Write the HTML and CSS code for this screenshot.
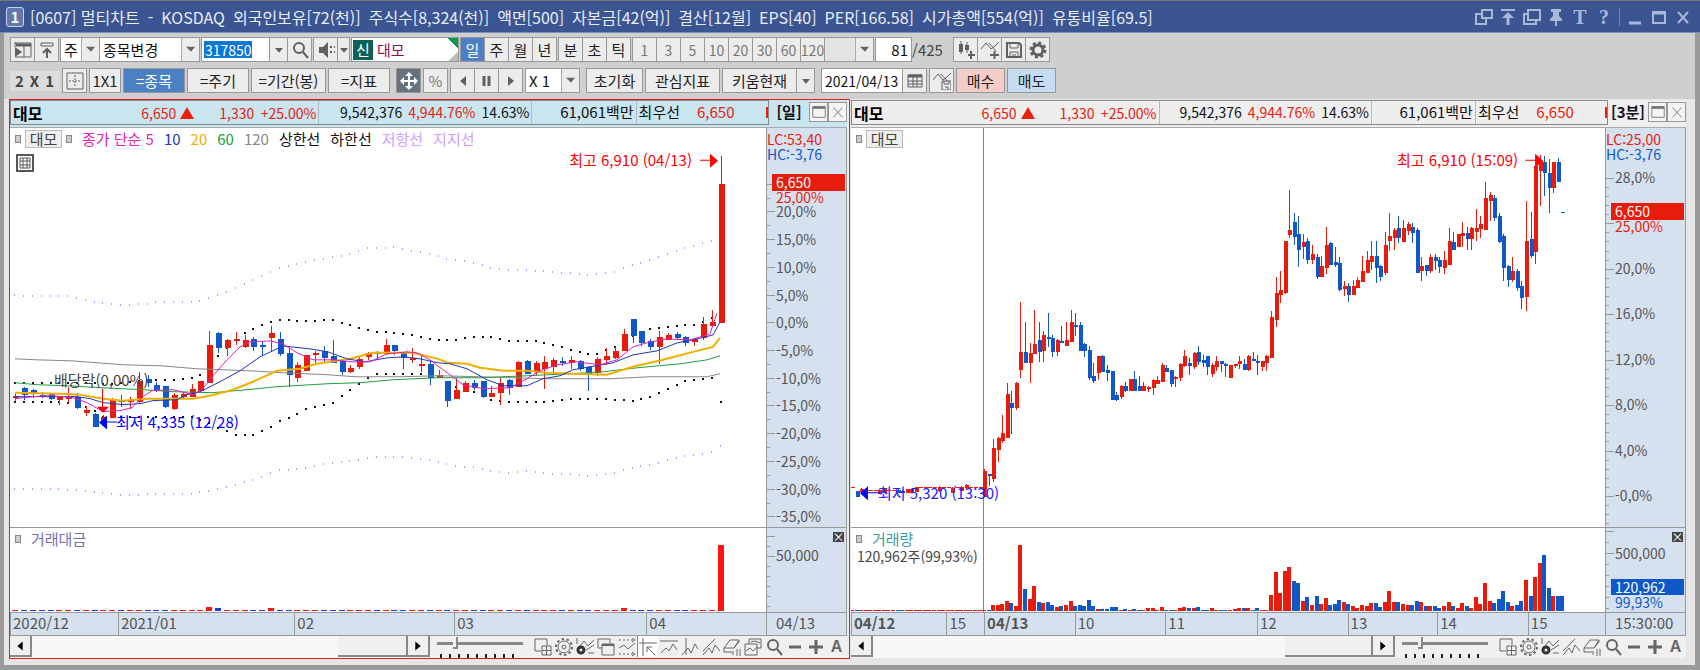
FILE: index.html
```html
<!DOCTYPE html>
<html lang="ko">
<head>
  <meta charset="UTF-8">
  <meta name="viewport" content="width=device-width, initial-scale=1.0">
  <title>[0607] 멀티차트</title>
  <link rel="stylesheet" href="styles.css">
</head>
<body>
  <svg class="defs" aria-hidden="true">
    <symbol id="i-dup" viewBox="0 0 18 18"><path d="M7 2h10v8H7zM7 6H1v10h10v-6" /></symbol>
    <symbol id="i-top" viewBox="0 0 18 18"><path d="M2 2h14" /><path d="M9 17V7" stroke-width="3" /><path class="fill" d="M3 10l6-6 6 6z" /></symbol>
    <symbol id="i-copy" viewBox="0 0 18 18"><path d="M5 2h12v10H5zM5 6H1v10h12v-4" /></symbol>
    <symbol id="i-pin" viewBox="0 0 18 18"><path class="fill" d="M4 1h10v3h-2v4l3 3v2H3v-2l3-3V4H4zM8 13h2v5H8z" /></symbol>
    <symbol id="i-min" viewBox="0 0 18 18"><path d="M3 15h12" stroke-width="3" /></symbol>
    <symbol id="i-max" viewBox="0 0 18 18"><path d="M3 4h12v11H3z" /><path d="M3 5h12" stroke-width="3" /></symbol>
    <symbol id="i-x" viewBox="0 0 18 18"><path d="M4 4l10 11M14 4L4 15" /></symbol>
    <symbol id="i-side" viewBox="0 0 18 18"><path d="M1 2h16v14H1M10 3v13M1 1v5" /><path d="M2 4h15" stroke-width="3" /><path class="fill" d="M1 6l7 5-7 5z" /></symbol>
    <symbol id="i-up" viewBox="0 0 18 18"><path d="M3 2h12v3H3z" /><path d="M9 17V8M5 12l4-4 4 4" stroke-width="2" /></symbol>
    <symbol id="i-search" viewBox="0 0 18 18"><circle cx="8" cy="7" r="5" stroke-width="2" /><path d="M12 11l5 6" stroke-width="2" /></symbol>
    <symbol id="i-sound" viewBox="0 0 18 18"><path class="fill" d="M2 6h4l5-5v16l-5-5H2z" /><path d="M13 6h2M13 11h2M17 6h1M17 11h1" stroke-width="2" /></symbol>
    <symbol id="i-bars" viewBox="0 0 18 18"><path d="M4 0v13M10 1v11" /><path class="fill" d="M2 3h4v8H2zM8 4h4v5H8z" /><path d="M11 14h7M14 10v8" stroke-width="2" /></symbol>
    <symbol id="i-wave" viewBox="0 0 18 18"><path d="M0 8l5-6 5 6 4-3 4-4M8 2l7 8" /><path d="M9 14h9M13.500 10v8" stroke-width="2" /></symbol>
    <symbol id="i-save" viewBox="0 0 18 18"><path d="M2 2h12l2 2v12H2z" stroke-width="2" /><path d="M5 2v5h8V2M5 16v-5h8v5M7 14h4" /></symbol>
    <symbol id="i-gear" viewBox="0 0 18 18"><circle cx="9" cy="9" r="5" stroke-width="3" /><circle cx="9" cy="9" r="7" stroke-width="3" stroke-dasharray="3 2.500" /></symbol>
    <symbol id="i-dash" viewBox="0 0 18 18"><path d="M1 1h16v16H1z" /><path d="M9 3v12M3 9h12" stroke-dasharray="2 1" /></symbol>
    <symbol id="i-move" viewBox="0 0 18 18"><path d="M9 3v12M3 9h12" stroke-width="2" /><path class="fill" d="M9 0l4 4H5zM9 18l4-4H5zM0 9l4-4v8zM18 9l-4-4v8z" /></symbol>
    <symbol id="i-prev" viewBox="0 0 18 18"><path class="fill" d="M12 4v10L6 9z" /></symbol>
    <symbol id="i-pause" viewBox="0 0 18 18"><path d="M6 4v10M11 4v10" stroke-width="3" /></symbol>
    <symbol id="i-next" viewBox="0 0 18 18"><path class="fill" d="M6 4v10l6-5z" /></symbol>
    <symbol id="i-down" viewBox="0 0 18 18"><path class="fill" d="M3 6h12l-6 7z" /></symbol>
    <symbol id="i-cal" viewBox="0 0 18 18"><path d="M2 3h14v12H2zM2 9h14M2 12h14M7 5v10M11 5v10" /><path d="M2 4h14" stroke-width="3" /></symbol>
    <symbol id="i-wavesave" viewBox="0 0 18 18"><path d="M0 8l5-6 5 6 4-3 4-4M8 2l7 8M9 9h9v9H9zM11 9v3h5V9M12 15h3v3" /></symbol>
    <symbol id="i-table" viewBox="0 0 18 18"><path d="M1 1h16v16H1z" stroke-width="2" /><path d="M4 4h10v10H4zM4 7h10M4 11h10M7 4v10M11 4v10" /></symbol>
    <symbol id="i-newwin" viewBox="0 0 18 18"><path d="M7 13H1V1h12v6" /><path d="M8 8h9v9H8zM8 12.500h9M12.500 8v9" /></symbol>
    <symbol id="i-cog" viewBox="0 0 18 18"><circle cx="9" cy="9" r="6" /><circle cx="9" cy="9" r="2" /><circle cx="9" cy="9" r="8" stroke-width="2" stroke-dasharray="2.500 2.500" /></symbol>
    <symbol id="i-set" viewBox="0 0 18 18"><path d="M1 0v6M4 8l4-5 4 5 6-6M10 12l8-5M12 15h6" /><circle class="ring" cx="5" cy="12" r="3" stroke-width="3" /></symbol>
    <symbol id="i-stack" viewBox="0 0 18 18"><path d="M5 10H1V1h12v4M5 6h12v11H5z" /><path d="M5 7h12" stroke-width="2" /></symbol>
    <symbol id="i-fit" viewBox="0 0 18 18"><path d="M1 2h16M1 16h16" stroke-dasharray="2 2" /><path d="M1 10l5-3 4 4 7-6M14 0l3 2-3 2M14 14l3 2-3 2" /></symbol>
    <symbol id="i-cross" viewBox="0 0 18 18"><path d="M4 0v18M0 5h18M8 9l8 8M8 14V9h5" /></symbol>
    <symbol id="i-hline" viewBox="0 0 18 18"><path d="M0 3h18M1 15l5-5 3 3 4-7 4 6" /></symbol>
    <symbol id="i-vline" viewBox="0 0 18 18"><path d="M5 0v17M1 17l6-7 3 5 4-9 3 5" /></symbol>
    <symbol id="i-trend" viewBox="0 0 18 18"><path d="M1 13L13 1M1 17l6-7 3 5 3-8 5 6" /></symbol>
    <symbol id="i-erase" viewBox="0 0 18 18"><path d="M1 10l6-8h9l-5 8zM1 10v4h8M11 10l5-6V2M10 17v-4M14 11v7M17 11v7" /></symbol>
    <symbol id="i-pics" viewBox="0 0 18 18"><path d="M5 6V1h12v9h-4M1 6h12v11H1zM2 13l4-3 3 3 4-4M7 4l4-1 5 2" /></symbol>
    <symbol id="i-minus" viewBox="0 0 18 18"><path d="M3 9h12" stroke-width="3" /></symbol>
    <symbol id="i-plus" viewBox="0 0 18 18"><path d="M2 9h14M9 2v14" stroke-width="3" /></symbol>
    <symbol id="i-box" viewBox="0 0 18 18"><path d="M2 3h14v12H2z" /><path d="M2 4h14" stroke-width="3" /></symbol>
  </svg>

  <header class="titlebar">
    <span class="win-no">1</span>
    <h1 class="title">
      <span>[0607] 멀티차트</span><span>-</span><span>KOSDAQ</span><span>외국인보유[72(천)]</span><span>주식수[8,324(천)]</span><span>액면[500]</span><span>자본금[42(억)]</span><span>결산[12월]</span><span>EPS[40]</span><span>PER[166.58]</span><span>시가총액[554(억)]</span><span>유통비율[69.5]</span>
    </h1>
    <div class="win-tools">
      <button aria-label="창 복제"><svg><use href="#i-dup" /></svg></button>
      <button aria-label="맨 위"><svg><use href="#i-top" /></svg></button>
      <button aria-label="복사"><svg><use href="#i-copy" /></svg></button>
      <button aria-label="고정"><svg><use href="#i-pin" /></svg></button>
      <button class="serif">T</button>
      <button class="serif">?</button>
      <i class="bar"></i>
      <button aria-label="최소화"><svg><use href="#i-min" /></svg></button>
      <button aria-label="최대화"><svg><use href="#i-max" /></svg></button>
      <button aria-label="닫기"><svg><use href="#i-x" /></svg></button>
    </div>
  </header>

  <main class="window">
    <div class="toolbar tight">
      <div class="group">
        <button aria-label="사이드"><svg><use href="#i-side" /></svg></button>
        <button aria-label="위로"><svg><use href="#i-up" /></svg></button>
      </div>
      <div class="group">
        <select class="w-40" aria-label="구분"><option>주</option></select>
        <select class="w-100" aria-label="변경"><option>종목변경</option></select>
      </div>
      <div class="group">
        <input class="code" type="text" value="317850" aria-label="종목코드">
        <button class="narrow" aria-label="목록"><svg><use href="#i-down" /></svg></button>
        <button aria-label="검색"><svg><use href="#i-search" /></svg></button>
      </div>
      <div class="group">
        <button aria-label="소리"><svg><use href="#i-sound" /></svg></button>
        <button class="slim" aria-label="소리 설정"><svg><use href="#i-down" /></svg></button>
      </div>
      <div class="stock"><b>신</b><span>대모</span></div>
      <div class="group">
        <button class="on">일</button><button>주</button><button>월</button><button>년</button>
      </div>
      <div class="group">
        <button>분</button><button>초</button><button>틱</button>
      </div>
      <div class="group dim">
        <button>1</button><button>3</button><button>5</button><button>10</button><button>20</button><button>30</button><button>60</button><button>120</button>
        <select class="w-50" aria-label="기타 주기" disabled><option></option></select>
      </div>
      <div class="count"><input type="text" value="81" aria-label="봉 개수"><span>/425</span></div>
      <div class="group">
        <button aria-label="봉 추가"><svg><use href="#i-bars" /></svg></button>
        <button aria-label="지표 추가"><svg><use href="#i-wave" /></svg></button>
        <button aria-label="저장"><svg><use href="#i-save" /></svg></button>
        <button aria-label="설정"><svg><use href="#i-gear" /></svg></button>
      </div>
    </div>

    <div class="toolbar">
      <span class="layout"><span>2</span> <span>X</span> <span>1</span></span>
      <div class="group"><button aria-label="배열"><svg><use href="#i-dash" /></svg></button></div>
      <div class="group"><button class="w-32">1X1</button></div>
      <div class="group"><button class="w-62 on">=종목</button></div>
      <div class="group"><button class="w-62">=주기</button></div>
      <div class="group"><button class="w-75">=기간(봉)</button></div>
      <div class="group push"><button class="w-62">=지표</button></div>
      <div class="group"><button class="dark" aria-label="이동"><svg><use href="#i-move" /></svg></button></div>
      <div class="group"><button class="pct">%</button></div>
      <div class="group">
        <button aria-label="이전"><svg><use href="#i-prev" /></svg></button>
        <button aria-label="정지"><svg><use href="#i-pause" /></svg></button>
        <button aria-label="다음"><svg><use href="#i-next" /></svg></button>
      </div>
      <div class="group push"><select class="w-55" aria-label="배속"><option>X 1</option></select></div>
      <div class="group"><button class="w-56">초기화</button></div>
      <div class="group"><button class="w-75">관심지표</button></div>
      <div class="group push">
        <button class="w-75">키움현재</button>
        <button class="narrow" aria-label="목록"><svg><use href="#i-down" /></svg></button>
      </div>
      <div class="group">
        <input class="date" type="text" value="2021/04/13" aria-label="날짜">
        <button aria-label="달력"><svg><use href="#i-cal" /></svg></button>
      </div>
      <div class="group"><button aria-label="지표 저장"><svg><use href="#i-wavesave" /></svg></button></div>
      <div class="group"><button class="w-49 buy">매수</button></div>
      <div class="group"><button class="w-49 sell">매도</button></div>
    </div>

    <div class="panels">
      <section class="panel active">
        <div class="head">
          <div class="quote">
            <div class="q1"><b>대모</b><span>6,650</span><i class="tri"></i><span class="chg">1,330</span><span class="rate">+25.00%</span></div>
            <div class="q2"><span>9,542,376</span><span class="up">4,944.76%</span><span>14.63%</span></div>
            <div class="q3">61,061백만</div>
            <div class="q4">최우선<span class="up">6,650</span></div>
          </div>
          <b class="cycle">[일]</b>
          <div class="mini">
            <button aria-label="확대"><svg><use href="#i-box" /></svg></button><button aria-label="닫기"><svg><use href="#i-x" /></svg></button>
          </div>
        </div>
        <div class="plot">
          <svg id="day-plot"></svg>
          <div class="legend">
            <i class="sq"></i><span class="chip">대모</span><i class="sq"></i>
            <span class="ma5">종가 단순 5</span><span class="ma10">10</span><span class="ma20">20</span><span class="ma60">60</span><span class="ma120">120</span><span>상한선</span><span>하한선</span><span class="band">저항선</span><span class="band">지지선</span>
          </div>
          <button class="grid-btn" aria-label="표"><svg><use href="#i-table" /></svg></button>
        </div>
        <div class="axis"><svg id="day-axis"></svg></div>
        <div class="plot volume">
          <svg id="day-vol"></svg>
          <div class="legend"><i class="sq"></i><span class="amount">거래대금</span></div>
        </div>
        <div class="axis volume"><svg id="day-vaxis"></svg><button class="close" aria-label="지표 닫기">×</button></div>
        <div class="time">
          <span style="flex-grow: 107">2020/12</span><span style="flex-grow: 177">2021/01</span><span style="flex-grow: 160">02</span><span style="flex-grow: 193">03</span><span style="flex-grow: 119">04</span>
        </div>
        <div class="time now">04/13</div>
        <div class="foot">
          <div class="scroll">
            <button aria-label="왼쪽"><svg><use href="#i-prev" /></svg></button>
            <div class="track"><i class="thumb"></i></div>
            <button aria-label="오른쪽"><svg><use href="#i-next" /></svg></button>
          </div>
          <input class="zoom" type="range" min="0" max="100" value="20" aria-label="확대 비율">
          <div class="tools">
            <button aria-label="새 창"><svg><use href="#i-newwin" /></svg></button>
            <button aria-label="환경"><svg><use href="#i-cog" /></svg></button>
            <button aria-label="지표 설정"><svg><use href="#i-set" /></svg></button>
            <button aria-label="겹치기"><svg><use href="#i-stack" /></svg></button>
            <button aria-label="맞춤"><svg><use href="#i-fit" /></svg></button>
            <button class="sel" aria-label="십자선"><svg><use href="#i-cross" /></svg></button>
            <button aria-label="수평선"><svg><use href="#i-hline" /></svg></button>
            <button aria-label="수직선"><svg><use href="#i-vline" /></svg></button>
            <button aria-label="추세선"><svg><use href="#i-trend" /></svg></button>
            <button aria-label="전체 지우기"><svg><use href="#i-erase" /></svg></button>
            <button aria-label="그림"><svg><use href="#i-pics" /></svg></button>
            <button aria-label="돋보기"><svg><use href="#i-search" /></svg></button>
            <button aria-label="축소"><svg><use href="#i-minus" /></svg></button>
            <button aria-label="확대"><svg><use href="#i-plus" /></svg></button>
            <button class="auto">A</button>
          </div>
        </div>
      </section>

      <section class="panel">
        <div class="head">
          <div class="quote">
            <div class="q1"><b>대모</b><span>6,650</span><i class="tri"></i><span class="chg">1,330</span><span class="rate">+25.00%</span></div>
            <div class="q2"><span>9,542,376</span><span class="up">4,944.76%</span><span>14.63%</span></div>
            <div class="q3">61,061백만</div>
            <div class="q4">최우선<span class="up">6,650</span></div>
          </div>
          <b class="cycle">[3분]</b>
          <div class="mini">
            <button aria-label="확대"><svg><use href="#i-box" /></svg></button><button aria-label="닫기"><svg><use href="#i-x" /></svg></button>
          </div>
        </div>
        <div class="plot">
          <svg id="min-plot"></svg>
          <div class="legend"><i class="sq"></i><span class="chip">대모</span></div>
        </div>
        <div class="axis"><svg id="min-axis"></svg></div>
        <div class="plot volume">
          <svg id="min-vol"></svg>
          <div class="legend"><i class="sq"></i><span class="qty">거래량</span></div>
          <div class="qty-text">120,962주(99,93%)</div>
        </div>
        <div class="axis volume"><svg id="min-vaxis"></svg><button class="close" aria-label="지표 닫기">×</button></div>
        <div class="time">
          <b style="flex-grow: 96">04/12</b><span style="flex-grow: 36">15</span><b style="flex-grow: 91">04/13</b><span style="flex-grow: 91">10</span><span style="flex-grow: 92">11</span><span style="flex-grow: 91">12</span><span style="flex-grow: 90">13</span><span style="flex-grow: 91">14</span><span style="flex-grow: 77">15</span>
        </div>
        <div class="time now">15:30:00</div>
        <div class="foot">
          <div class="scroll">
            <button aria-label="왼쪽"><svg><use href="#i-prev" /></svg></button>
            <div class="track"><i class="thumb wide"></i></div>
            <button aria-label="오른쪽"><svg><use href="#i-next" /></svg></button>
          </div>
          <input class="zoom" type="range" min="0" max="100" value="20" aria-label="확대 비율">
          <div class="tools">
            <button aria-label="새 창"><svg><use href="#i-newwin" /></svg></button>
            <button aria-label="환경"><svg><use href="#i-cog" /></svg></button>
            <button aria-label="지표 설정"><svg><use href="#i-set" /></svg></button>
            <button aria-label="추세선"><svg><use href="#i-trend" /></svg></button>
            <button aria-label="전체 지우기"><svg><use href="#i-erase" /></svg></button>
            <button aria-label="돋보기"><svg><use href="#i-search" /></svg></button>
            <button aria-label="축소"><svg><use href="#i-minus" /></svg></button>
            <button aria-label="확대"><svg><use href="#i-plus" /></svg></button>
            <button class="auto">A</button>
          </div>
        </div>
      </section>
    </div>
  </main>

  <script src="chart.js"></script>
</body>
</html>
```

FILE: styles.css
```css
* {
  box-sizing: border-box;
}

body {
  margin: 0;
  height: 100vh;
  min-height: 480px;
  display: flex;
  flex-direction: column;
  overflow: hidden;
  font-family: "Noto Sans CJK KR", sans-serif;
  font-size: 15px;
  line-height: 20px;
  color: #111;
  white-space: nowrap;
}

button,
input,
select {
  font: inherit;
  color: inherit;
  margin: 0;
  padding: 0;
  border-radius: 0;
}

button {
  display: flex;
  align-items: center;
  justify-content: center;
  border: 0;
  background: none;
}

svg {
  fill: none;
  stroke: currentColor;
  display: block;
}

.fill {
  fill: currentColor;
  stroke: none;
}

.ring {
  stroke: #333;
}

.defs {
  display: none;
}

/* title bar */

.titlebar {
  display: flex;
  align-items: center;
  height: 33px;
  padding: 0 8px 0 6px;
  background: #3a5591;
  border-top: 1px solid #777;
  border-bottom: 1px solid #7d90bd;
  color: #e8edf8;
}

.win-no {
  width: 18px;
  height: 20px;
  line-height: 18px;
  border: 1px solid #c8d2ea;
  border-radius: 3px;
  background: #6379ae;
  font-weight: bold;
  text-align: center;
  color: #fff;
}

.title {
  display: flex;
  gap: 8px;
  margin: 0 auto 0 6px;
  font-size: 16px;
  font-weight: normal;
}

.win-tools {
  display: flex;
  align-items: center;
  gap: 6px;
  color: #aab8d8;
}

.win-tools button {
  width: 18px;
  height: 20px;
}

.win-tools svg {
  width: 18px;
  height: 18px;
  stroke-width: 2;
}

.win-tools .serif {
  font-family: "Liberation Serif", serif;
  font-size: 20px;
  font-weight: bold;
}

.win-tools .bar {
  width: 1px;
  height: 18px;
  background: #7385b3;
}

/* toolbars */

.window {
  flex: 1;
  min-height: 0;
  display: flex;
  flex-direction: column;
  border: solid #9b9b9b;
  border-width: 0 5px 5px 4px;
  background: #cfcfcf;
}

.toolbar {
  display: flex;
  align-items: center;
  gap: 2px;
  height: 25px;
  margin: 5px 0 6px 6px;
}

.toolbar.tight {
  gap: 1px;
  margin: 4px 0 1px 6px;
}

.group {
  display: flex;
  height: 25px;
}

.group > * {
  border: 1px solid #989898;
  background: #ececec;
}

.group > * + * {
  margin-left: -1px;
}

.group button {
  width: 25px;
  color: #222;
}

.group button svg {
  width: 18px;
  height: 18px;
  color: #606060;
}

.group .narrow {
  width: 19px;
}

.group .slim {
  width: 13px;
}

.group .narrow svg,
.group .slim svg {
  width: 12px;
  flex: none;
}

.group .on {
  background: #4c80c4;
  color: #fff;
}

.group .dark {
  background: #66727f;
}

.group .dark svg {
  color: #fff;
}

.group .pct,
.dim button {
  color: #777;
}

.dim button {
  font-size: 14px;
}

.group .buy {
  background: #f5cdc8;
}

.group .sell {
  background: #c5dcf3;
}

.group.push {
  margin-right: 4px;
}

.group .w-32 { width: 32px; }
.group .w-49 { width: 49px; }
.group .w-56 { width: 57px; }
.group .w-62 { width: 62px; }
.group .w-75 { width: 75px; }
.w-40 { width: 40px; }
.w-50 { width: 50px; }
.w-55 { width: 55px; }
.w-100 { width: 101px; }

select {
  appearance: none;
  padding: 0 0 0 3px;
}

.group select {
  background:
    url("data:image/svg+xml,%3Csvg xmlns='http://www.w3.org/2000/svg' width='18' height='24'%3E%3Cpath fill='%23ececec' d='M0 0h18v24H0z'/%3E%3Cpath fill='%23aaa' d='M0 0h1v24H0z'/%3E%3Cpath fill='%23666' d='M5 9h9l-4 5z'/%3E%3C/svg%3E") right center no-repeat #fff;
}

.group select:disabled {
  opacity: 1;
  background-color: #e4e4e4;
}

.group input,
.count input {
  background-color: #fff;
  padding: 0 3px;
}

.group .code {
  width: 69px;
  background: linear-gradient(#0a78d7, #0a78d7) 2px center / 48px 17px no-repeat #fff;
  color: #fff;
  font-size: 14px;
}

.group .date {
  width: 82px;
  font-size: 14px;
}

.stock {
  display: flex;
  align-items: center;
  gap: 4px;
  width: 108px;
  height: 25px;
  padding-left: 1px;
  border: 1px solid #989898;
  color: #8b1050;
  background:
    linear-gradient(to top right, transparent 50%, #0a9a55 50%) right top / 10px 11px no-repeat,
    linear-gradient(to bottom right, transparent 50%, #bbb 50%) right bottom / 9px 10px no-repeat,
    #fff;
}

.stock b {
  width: 20px;
  background: #0a6158;
  color: #fff;
  font-weight: normal;
  text-align: center;
}

.count {
  display: flex;
  align-items: center;
  width: 77px;
  color: #444;
}

.count input {
  width: 37px;
  height: 25px;
  border: 1px solid #989898;
  text-align: right;
  color: #111;
}

.layout {
  display: flex;
  justify-content: space-between;
  width: 50px;
  padding: 0 6px 0 5px;
  background: #dcdcdc;
  font-weight: bold;
  color: #444;
}

/* chart panels */

.panels {
  flex: 1;
  min-height: 0;
  display: grid;
  grid-template-columns: 841fr 837fr;
  padding: 0 8px 6px 5px;
  background: #e6e6e6;
}

.panel {
  display: grid;
  grid-template-columns: minmax(0, 1fr) 81px;
  grid-template-rows: 28px minmax(0, 401fr) minmax(0, 85fr) 24px 22px;
  border: 1px solid #e6e6e6;
  background: #eee;
  min-width: 0;
}

.panel.active {
  padding-right: 2px;
  border-color: #f01818;
}

.head {
  grid-column: 1 / -1;
  display: flex;
  align-items: flex-start;
  border-bottom: 1px solid #aaa;
}

.quote {
  flex: 1;
  display: flex;
  height: 25px;
  line-height: 22px;
  border: 1px solid #888;
  background: #eee;
  overflow: hidden;
}

.active .head,
.active .quote {
  background: #c8e5f0;
}

.quote > div {
  display: flex;
  justify-content: flex-end;
  gap: 6px;
  min-width: 0;
  padding: 0 2px;
  border-right: 1px solid #b5bcc0;
}

.quote .q1 {
  flex: 312 1 0;
  align-items: center;
  gap: 4px;
  font-size: 14px;
  color: #e8200c;
}

.q1 b {
  flex: 1;
  font-size: 16px;
  color: #000;
}

.tri {
  border: solid transparent;
  border-width: 0 7px 12px;
  border-bottom-color: #e8200c;
}

.chg {
  width: 56px;
  text-align: right;
}

.rate {
  width: 58px;
  text-align: right;
}

.quote .q2 {
  flex: 214 1 0;
  font-size: 14px;
}

.quote .q3 {
  flex: 102 1 0;
}

.quote .q4 {
  flex: 129 1 0;
  justify-content: flex-start;
  gap: 17px;
  border: solid;
  border-width: 0 2px 0 0;
  border-image: linear-gradient(transparent 30%, #e8200c 30%, #e8200c 70%, transparent 70%) 1;
}

.up {
  color: #e8200c;
}

.cycle {
  width: 40px;
  line-height: 24px;
  text-align: center;
}

.mini {
  display: flex;
  margin-top: 2px;
}

.mini button {
  width: 19px;
  height: 20px;
  border: 1px solid #999;
  background: #f4f4f4;
  color: #777;
}

.mini svg {
  width: 16px;
  height: 16px;
  flex: none;
}

.plot {
  position: relative;
  min-width: 0;
  background: #fff;
}

.plot > svg,
.axis > svg {
  position: absolute;
  inset: 0;
  width: 100%;
  height: 100%;
  stroke: none;
}

.axis {
  position: relative;
  background: #d6e1ef;
  border: solid #999;
  border-width: 0 1px;
}

.volume {
  border-top: 1px solid #999;
}

.legend {
  position: relative;
  display: flex;
  align-items: center;
  gap: 10px;
  height: 18px;
  padding-left: 5px;
  margin-top: 2px;
}

.sq {
  width: 6px;
  height: 8px;
  border: 1px solid #888;
  background: #ccc;
}

.chip {
  width: 37px;
  height: 18px;
  line-height: 16px;
  margin: 0 -6px;
  border: 1px solid #bbb;
  background: #eee;
  color: #444;
  text-align: center;
}

.ma5 { color: #e020b8; }
.ma10 { color: #2038b8; }
.ma20 { color: #f0ae00; }
.ma60 { color: #20a040; }
.ma120 { color: #888; }
.band { color: #cf9cff; }
.amount { color: #7470a8; }
.qty { color: #409c9c; }

.qty-text {
  position: relative;
  padding-left: 6px;
  font-size: 14px;
  line-height: 16px;
  color: #444;
}

.grid-btn {
  position: relative;
  margin: 6px 0 0 6px;
}

.grid-btn svg {
  width: 18px;
  height: 18px;
  color: #555;
}

.close {
  position: absolute;
  top: 4px;
  right: 2px;
  width: 11px;
  height: 10px;
  background: #444;
  color: #fff;
  font-size: 12px;
  line-height: 10px;
}

.time {
  display: flex;
  min-width: 0;
  border: solid #999;
  border-width: 1px 0;
  background: #d6e1ef;
  color: #555;
}

.time > * {
  flex: 1 1 0;
  min-width: 0;
  padding-left: 2px;
  border-left: 1px solid #999;
}

.time.now {
  padding-left: 9px;
  border-width: 1px;
}

.foot {
  grid-column: 1 / -1;
  display: flex;
  background: #f0f0f0;
}

.scroll {
  flex: 1;
  display: flex;
}

.scroll button,
.thumb {
  width: 22px;
  height: 21px;
  border: solid #888;
  border-width: 0 2px 2px 0;
  background: #f0f0f0;
  color: #000;
}

.scroll svg {
  width: 16px;
  height: 16px;
}

.track {
  flex: 1;
  display: flex;
  justify-content: flex-end;
  background: #f7f7f7;
}

.thumb {
  width: 70px;
}

.thumb.wide {
  width: 88px;
}

.zoom {
  appearance: none;
  width: 86px;
  height: 22px;
  margin: 0 9px 0 7px;
  background:
    repeating-linear-gradient(to right, #222 0 2px, transparent 2px 9px) 3px bottom / 80px 4px no-repeat,
    linear-gradient(#888, #888) 0 6px / 100% 3px no-repeat;
}

.zoom::-webkit-slider-thumb {
  appearance: none;
  width: 5px;
  height: 12px;
  margin-top: -8px;
  border: solid #888;
  border-width: 0 2px 2px 0;
  background: #f0f0f0;
}

.tools {
  display: flex;
}

.tools button {
  width: 21px;
  height: 21px;
  color: #666;
}

.tools svg {
  width: 18px;
  height: 18px;
}

.tools .sel {
  background: #fff;
  border-left: 1px solid #888;
}

.tools .auto {
  font-family: "Liberation Sans", sans-serif;
  font-size: 16px;
  font-weight: bold;
}

/* svg text */

.plot text,
.axis text {
  font-size: 15px;
  dominant-baseline: central;
}

.axis text {
  font-size: 14px;
}
```

FILE: chart.js
```js
const RED = '#e81c0c';
const BLUE = '#1058c8';

// each bar: colour, high, body top, body bottom, low (in plot units)
const dayBars = `R267,269,270,274 B260,261,267,273 B262,263,265,271 B265,268,269,271 B266,266,271,273 R269,270,272,278
R260,270,271,276 B266,270,280,282 R279,283,285,289 B286,287,299,300 R288,290,292,293 R271,273,290,290 B268,273,274,280
R270,273,274,282 R245,254,274,276 B248,252,255,260 B255,258,262,265 B259,259,279,281 R266,268,281,283 R265,267,269,272
R257,262,269,270 R254,254,263,266 R204,218,255,256 B205,206,220,226 R212,213,220,229 R205,212,213,218 R208,213,219,221
B210,212,219,224 B214,218,219,229 R199,206,210,225 B205,212,226,229 B221,226,247,260 R235,238,250,255 R228,228,243,243
R224,226,227,236 B219,224,230,235 B213,229,235,236 B233,234,244,248 R238,241,244,246 R230,232,239,242 R225,226,229,233
B224,225,226,232 R212,218,226,228 B218,218,223,228 B225,226,230,242 R221,231,232,236 R228,237,238,245 B233,237,250,258
R243,248,250,251 B254,254,273,280 R251,263,271,272 R254,256,264,264 B253,256,260,263 B254,254,269,271 R259,266,269,269
R251,256,265,278 B252,253,260,268 R234,235,259,259 B233,234,246,246 R234,236,244,248 R229,235,241,262 R231,233,239,246
B230,234,235,239 R229,233,235,242 B233,234,241,244 B239,240,246,264 R230,232,245,249 R221,229,232,238 R220,224,230,232
R202,207,223,224 B192,192,208,216 B204,204,215,219 B212,214,219,223 R204,210,219,237 R206,208,212,213 B205,207,210,213
B209,210,215,219 R211,212,214,219 R190,197,210,213 R183,195,198,198 R28,56,195,195`;

const minBars = `R361,361,361,361 B365,365,370,370 R362,363,365,365 R364,364,364,364 R364,364,364,364 R364,364,364,364 R363,364,367,368
R363,363,366,366 R364,364,364,364 R364,364,364,364 B363,364,366,366 B364,365,366,366 R364,363,366,366 R363,363,366,366 R361,361,365,365
R361,361,361,361 R361,361,361,361 R361,361,361,361 R361,361,361,361 R360,361,364,366 R361,361,361,361 R361,361,361,361 R361,362,366,367
R361,361,361,361 R360,361,364,365 R358,359,361,363 R361,361,361,361 R361,361,361,361 R361,361,361,361
R343,345,370,370 B348,348,349,360 R313,322,352,356 R311,312,323,336 R288,307,314,316 R256,267,310,310 B264,276,280,307
R255,256,280,283 R175,225,242,251 B195,225,235,236 R216,226,235,256 R183,217,226,227 B195,213,224,235 R204,208,223,235
B186,210,211,220 B208,211,224,230 R212,213,224,229 B199,214,215,215 R195,213,218,218 R183,195,214,215 B186,198,199,209
B195,198,223,224 B216,217,223,230 B219,223,250,253 B236,249,253,256 R229,229,245,253 B228,229,244,245 B238,243,245,254
B244,244,272,272 B265,268,272,274 R258,259,269,272 B255,259,263,265 R252,252,263,263 B244,252,263,263 B249,259,263,263
R255,259,263,263 R259,260,261,265 R252,253,260,268 R249,253,256,256 R236,238,254,254 B238,241,244,244 B243,243,256,260
R249,250,251,260 R236,237,250,254 R223,229,238,240 B231,236,238,248 R225,226,239,242 B219,225,234,238 B228,233,235,240
B229,229,239,248 R236,238,246,250 R229,234,239,244 B234,234,236,245 B236,237,238,250 R238,238,250,250 R237,237,238,241
R229,234,236,242 B232,237,242,242 R228,229,242,244 B225,232,233,233 B228,234,235,248 R234,234,239,244 R228,229,235,244
R184,190,230,230 R150,166,192,200 R144,163,167,176 R114,114,165,167 R62,103,107,110 B85,94,108,117 B88,107,122,139
R107,115,119,132 B111,114,132,137 R118,127,132,137 B127,130,149,152 R129,139,149,149 R99,118,140,146 B115,116,137,137
B120,135,137,140 B130,136,162,164 R154,159,161,169 B156,159,167,175 R153,159,167,167 R150,153,160,160 R129,144,154,154
R124,133,145,146 R114,129,134,143 B114,129,140,156 B138,139,149,154 R105,118,145,148 R85,109,113,123 R101,103,110,123
B88,101,110,115 R92,100,113,113 R94,96,102,107 B95,99,104,115 B101,103,145,145 R130,139,143,154 B138,138,143,149
R127,130,143,146 B127,130,133,143 B130,133,139,146 R124,133,140,147 R100,114,137,137 B105,115,122,123 R107,107,119,119
R94,106,108,119 B99,106,111,122 R99,100,110,122 R81,101,104,113 R88,96,100,110 R54,70,101,101 R64,67,72,93 B67,70,89,93
B85,88,113,115 B107,109,140,154 B138,139,152,160 R130,144,152,155 B142,144,160,164 B154,159,170,182 R73,114,169,184
B84,112,128,130 R36,38,123,137 R27,33,42,78 B28,34,44,68 B31,45,59,85 R34,34,59,65 B30,34,53,53 B84,84,84,84`;

const minVolume = [1, 1, 6, 6, 7, 10, 8, 5, 66, 22, 12, 25, 9, 8, 9, 6, 4, 5, 6, 10, 5, 6, 5, 11, 5, 2, 2, 2, 4, 4, 1, 2, 1, 2,
  1, 1, 3, 3, 1, 4, 1, 1, 1, 3, 4, 3, 3, 4, 1, 1, 3, 1, 1, 1, 1, 2, 3, 3, 3, 1, 3, 1, 1, 16, 39, 18, 40, 44, 30, 28, 10, 14, 6, 15,
  7, 13, 6, 7, 11, 9, 7, 5, 3, 6, 5, 8, 8, 4, 9, 20, 9, 9, 7, 6, 6, 10, 9, 5, 5, 5, 3, 5, 9, 5, 3, 8, 5, 3, 14, 7, 28, 10, 8, 12,
  20, 9, 5, 6, 10, 31, 15, 34, 48, 56, 23, 15, 15, 15];

const lines = [
  ['#888', 1, '5,232 27,233 62,234 114,238 151,239 187,242 240,244 273,246 318,248 345,250 390,250 428,249 470,250 537,252 600,252 640,250 697,250 710,247'],
  ['#20a040', 1, '5,256 27,258 57,259 90,261 133,263 163,265 203,266 237,263 267,260 318,257 350,256 383,253 428,251 470,251 517,249 560,247 593,245 627,241 670,237 697,233 710,229'],
  ['#f0ae00', 2, '5,266 50,267 70,268 93,272 113,274 137,272 183,272 200,269 223,263 243,255 267,244 290,242 307,237 340,232 363,226 403,226 428,232 438,236 457,237 470,241 493,244 517,244 537,246 563,247 597,248 623,240 653,233 683,225 703,220 710,211'],
  ['#2038b8', 1, '5,270 67,270 80,272 93,276 113,278 130,277 143,274 167,273 177,268 190,265 210,255 230,244 250,230 273,219 300,222 318,225 337,232 355,235 377,231 393,230 410,232 428,236 440,237 457,242 477,253 493,259 517,259 533,252 550,249 563,243 580,240 603,236 623,228 647,224 667,216 687,212 703,208 710,195'],
  ['#e020b8', 1, '5,272 23,270 40,269 63,271 77,276 93,285 110,284 122,281 133,270 142,264 163,263 183,268 192,263 203,249 217,233 230,220 240,215 260,214 273,217 287,226 303,233 323,233 343,235 360,235 377,227 397,225 407,226 420,233 429,240 440,248 453,258 473,262 500,261 517,252 530,244 547,238 567,235 590,238 607,233 623,220 640,215 657,212 680,213 700,207 707,186']
];

const dots = [
  ['#c890ff', '4,168 14,169 57,169 77,173 92,176 110,178 137,177 145,175 180,175 190,174 198,171 215,166 250,150 268,141 305,133 340,127 358,121 385,120 400,123 428,128 437,132 455,134 473,138 488,142 517,143 563,146 578,148 603,145 622,138 640,133 667,123 683,119 703,113'],
  ['#c890ff', '4,363 50,363 67,364 90,367 113,369 137,368 180,368 198,365 223,359 243,354 268,344 287,343 313,338 340,335 365,331 390,330 427,335 445,340 463,341 480,344 498,347 517,345 537,347 563,348 580,350 603,347 622,342 647,337 673,330 701,326 711,319'],
  ['#111', '4,256 40,256 100,257 143,253 170,253 189,250 207,230 217,221 233,207 251,198 268,193 303,194 322,193 340,198 365,205 390,206 427,213 445,213 463,210 482,210 498,214 525,214 550,220 578,227 587,227 605,220 613,211 622,209 630,205 640,202 665,199 683,198 693,195 703,190'],
  ['#111', '4,275 57,276 75,280 84,284 93,290 180,290 198,296 207,301 217,305 223,308 242,309 260,301 268,295 287,288 297,282 322,277 330,270 339,264 348,258 357,252 365,247 410,247 428,249 445,260 463,265 480,273 498,275 542,275 567,272 587,272 622,274 640,270 657,263 675,254 703,251 711,276']
];

function parseBars(text) {
  return text.split(/\s+/).map(s => ({ color: s[0] === 'R' ? RED : BLUE, v: s.slice(1).split(',').map(Number) }));
}

const day = parseBars(dayBars);
const min = parseBars(minBars);
const dayX = i => 5.3 + i * 8.8175;
const minX = i => 1 + i * 4.56;

const rect = (x, y, w, h, c) => `<rect x="${Math.round(x)}" y="${Math.round(y)}" width="${w}" height="${Math.max(1, Math.round(h))}" fill="${c}"/>`;
const text = (x, y, s, c) => `<text x="${x}" y="${y}" fill="${c}">${s}</text>`;

function candles(bars, xAt, width, kx, ky) {
  return bars.map((b, i) => {
    const x = Math.round(xAt(i) * kx);
    const [hi, top, bottom, lo] = b.v.map(n => n * ky);
    return rect(x, hi, 1, lo - hi, b.color) + rect(x - (width - 1) / 2, top, width, bottom - top + 1, b.color);
  }).join('');
}

function valueAt(points, x) {
  for (let i = 1; i < points.length; i++) {
    const [x0, y0] = points[i - 1];
    const [x1, y1] = points[i];
    if (x <= x1) return y0 + (y1 - y0) * (x - x0) / (x1 - x0);
  }
  return null;
}

const pairs = s => s.split(' ').map(p => p.split(',').map(Number));

function size(id, w, h) {
  const el = document.getElementById(id);
  return [el, el.clientWidth / w, el.clientHeight / h];
}

function drawDay() {
  const [el, kx, ky] = size('day-plot', 756, 401);
  let out = '';
  dots.forEach(([c, s]) => {
    const pts = pairs(s);
    day.forEach((b, i) => {
      const y = valueAt(pts, dayX(i));
      if (y !== null) out += rect(dayX(i) * kx - 1, y * ky - 1, c === '#111' ? 2 : 1, 2, c);
    });
  });
  out += candles(day, dayX, 6, kx, ky);
  lines.forEach(([c, w, s]) => {
    const pts = pairs(s).map(([x, y]) => `${x * kx},${y * ky}`).join(' ');
    out += `<polyline points="${pts}" fill="none" stroke="${c}" stroke-width="${w}"/>`;
  });
  out += text(44 * kx, 253 * ky, '배당락(0,00%)', '#444');
  out += `<path transform="translate(${93 * kx} ${262 * ky})" d="M-1 0h1v18h6l-6 6-6-6h5z" fill="#f00"/>`;
  out += text(106 * kx, 295 * ky, '최저 4,335 (12/28)', '#00f');
  out += `<path transform="translate(${89 * kx} ${296 * ky})" d="M0 0l8-7v6h10v1H8v7z" fill="#00f"/>`;
  out += `<text x="${682 * kx}" y="${32 * ky}" fill="#f00" text-anchor="end">최고 6,910 (04/13)</text>`;
  out += `<path transform="translate(${708 * kx} ${33 * ky})" d="M0 0l-8-7v6h-10v1h10v7z" fill="#f00"/>`;
  el.innerHTML = out;
}

function drawMin() {
  const [el, kx, ky] = size('min-plot', 755, 401);
  let out = rect(132 * kx, 0, 1, 401 * ky, '#e06060');
  out += candles(min, minX, 4, kx, ky);
  out += text(27 * kx, 366 * ky, '최저 5,320 (13:30)', '#22f');
  out += `<path transform="translate(${9 * kx} ${367 * ky})" d="M0 0l8-7v6h12v1H8v7z" fill="#00f"/>`;
  out += `<text x="${668 * kx}" y="${32 * ky}" fill="#f00" text-anchor="end">최고 6,910 (15:09)</text>`;
  out += `<path transform="translate(${693 * kx} ${33 * ky})" d="M0 0l-8-7v6h-10v1h10v7z" fill="#f00"/>`;
  el.innerHTML = out;
}

function drawVolume() {
  const [dv, kx, ky] = size('day-vol', 756, 84);
  const big = { 22: 4, 23: 3, 29: 3, 69: 3, 80: 66 };
  dv.innerHTML = day.map((b, i) => {
    const h = (big[i] || 1) * ky;
    return rect(dayX(i) * kx - 3, 83 * ky - h, 6, h, b.color === RED ? '#ff1410' : '#2838e0');
  }).join('');

  const [mv, mx, my] = size('min-vol', 755, 84);
  mv.innerHTML = rect(132 * mx, 0, 1, 84 * my, '#e06060') + min.map((b, i) => {
    const h = (i < 29 ? 1 : minVolume[i - 29]) * my;
    return rect(minX(i) * mx - 2, 83 * my - h, 4, h, b.color);
  }).join('');
}

function ticks(from, step, count, every, ky) {
  let out = '';
  for (let i = 0; i < count; i++) out += rect(0, (from + step * i) * ky, i % every ? 3 : 8, 1, '#999');
  return out;
}

function drawAxes() {
  const [da, , ky] = size('day-axis', 80, 401);
  let out = ticks(56, 13.93, 25, 2, ky);
  for (let i = 1; i <= 12; i++) out += text(9, (56 + 27.86 * i) * ky, `${25 - 5 * i},0%`, '#555');
  out += text(0, 11 * ky, 'LC:53,40', RED) + text(0, 26 * ky, 'HC:-3,76', BLUE);
  out += rect(5, 46 * ky, 73, 17, RED) + text(9, 54 * ky, '6,650', '#fff') + rect(9, 64 * ky, 48, 13, '#d6e1ef') + text(9, 69 * ky, '25,00%', RED);
  da.innerHTML = out;

  const [ma, , my] = size('min-axis', 80, 401);
  out = ticks(50, 9.14, 39, 5, my);
  [28, 24, 20, 16, 12, 8, 4, '-0'].forEach((n, i) => {
    if (n !== 24) out += text(9, (49 + 45.7 * i) * my, `${n},0%`, '#555');
  });
  out += text(0, 11 * my, 'LC:25,00', RED) + text(0, 26 * my, 'HC:-3,76', BLUE);
  out += rect(5, 75 * my, 73, 17, RED) + text(9, 83 * my, '6,650', '#fff') + text(9, 98 * my, '25,00%', RED);
  ma.innerHTML = out;

  const [dv, , dy] = size('day-vaxis', 80, 84);
  dv.innerHTML = ticks(8, 10, 8, 10, dy) + rect(0, 28 * dy, 8, 1, '#999') + text(9, 27 * dy, '50,000', '#555');

  const [mv, , vy] = size('min-vaxis', 80, 84);
  mv.innerHTML = ticks(3, 11, 8, 10, vy) + rect(0, 25 * vy, 8, 1, '#999') + text(9, 25 * vy, '500,000', '#555') +
    rect(5, 51 * vy, 73, 16, BLUE) + text(9, 59 * vy, '120,962', '#fff') + text(9, 74 * vy, '99,93%', BLUE);
}

function draw() {
  drawDay();
  drawMin();
  drawVolume();
  drawAxes();
}

draw();
window.addEventListener('resize', draw);
```
